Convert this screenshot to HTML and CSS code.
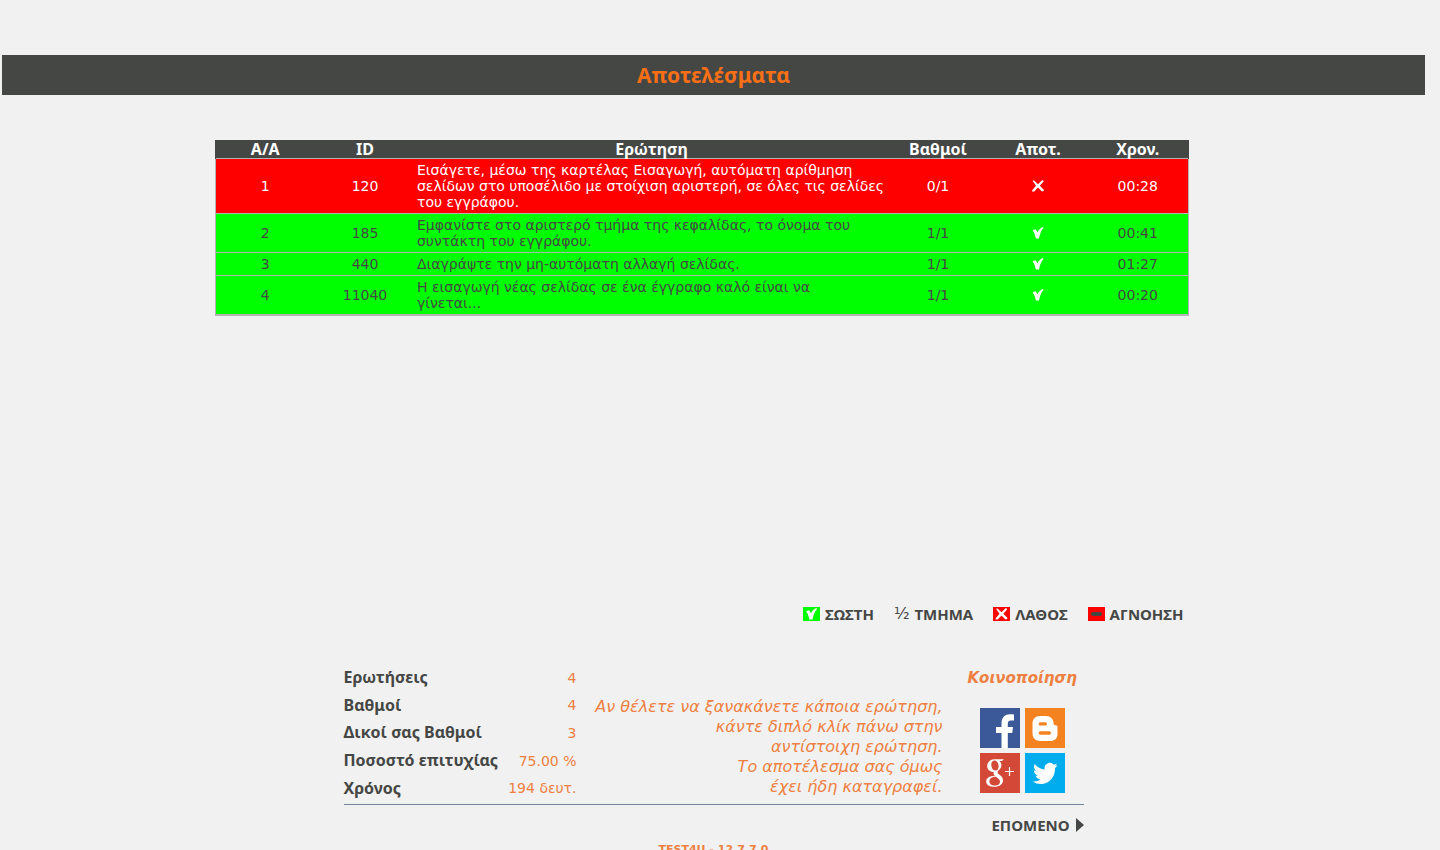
FILE: index.html
```html
<!DOCTYPE html>
<html lang="el">
<head>
<meta charset="utf-8">
<title>Αποτελέσματα</title>
<link rel="stylesheet" href="styles.css">
</head>
<body>
<svg class="symbols" aria-hidden="true">
  <symbol id="check" viewBox="0 0 12 12"><path d="M0.600 3.200 3.800 2.300 5.400 5.200 C6.800 2.600 8.500 0.800 11 0 L11.500 1 C9.200 3.600 7.900 7 7 11.600 L3.900 11.600 C3.200 8.400 2.200 5.400 0.600 3.200Z" fill="#fff"/></symbol>
  <symbol id="cross" viewBox="0 0 14 12"><path d="M1.500 0.800 3 0.400 7 4.200 11 0.200 12.400 0.400 12.600 1.600 8.800 5.800 13 10 12.600 11 11 11.400 7 7.600 3.200 11.600 1 11.400 1.200 10.200 5 5.800Z" fill="#fff"/></symbol>
</svg>
<header class="banner"><h1>Αποτελέσματα</h1></header>
<main>
  <section class="results">
    <table class="grid">
      <colgroup><col class="c-num"><col class="c-num"><col><col class="c-num"><col class="c-num"><col class="c-num"></colgroup>
      <thead>
        <tr><th>A/A</th><th>ID</th><th>Ερώτηση</th><th>Βαθμοί</th><th>Αποτ.</th><th>Χρον.</th></tr>
      </thead>
      <tbody>
        <tr class="wrong"><td>1</td><td>120</td><td class="question">Εισάγετε, μέσω της καρτέλας Εισαγωγή, αυτόματη αρίθμηση<br>σελίδων στο υποσέλιδο με στοίχιση αριστερή, σε όλες τις σελίδες<br>του εγγράφου.</td><td>0/1</td><td><svg class="mark" role="img" aria-label="Λάθος"><use href="#cross"/></svg></td><td>00:28</td></tr>
        <tr><td>2</td><td>185</td><td class="question">Εμφανίστε στο αριστερό τμήμα της κεφαλίδας, το όνομα του<br>συντάκτη του εγγράφου.</td><td>1/1</td><td><svg class="mark" role="img" aria-label="Σωστή"><use href="#check"/></svg></td><td>00:41</td></tr>
        <tr><td>3</td><td>440</td><td class="question">Διαγράψτε την μη-αυτόματη αλλαγή σελίδας.</td><td>1/1</td><td><svg class="mark" role="img" aria-label="Σωστή"><use href="#check"/></svg></td><td>01:27</td></tr>
        <tr><td>4</td><td>11040</td><td class="question">Η εισαγωγή νέας σελίδας σε ένα έγγραφο καλό είναι να<br>γίνεται...</td><td>1/1</td><td><svg class="mark" role="img" aria-label="Σωστή"><use href="#check"/></svg></td><td>00:20</td></tr>
      </tbody>
    </table>
  </section>
  <ul class="legend">
    <li><svg viewBox="0 0 17 14"><path d="M0 0h17v14H0z" fill="#0f0"/><use href="#check" x="2" y="1" width="13" height="12"/></svg>ΣΩΣΤΗ</li>
    <li><span class="half">½</span>ΤΜΗΜΑ</li>
    <li><svg viewBox="0 0 17 14"><path d="M0 0h17v14H0z" fill="#f00"/><use href="#cross" x="1" y="1" width="15" height="12"/></svg>ΛΑΘΟΣ</li>
    <li><svg viewBox="0 0 17 14"><path d="M0 0h17v14H0z" fill="#f00"/><rect x="3" y="5" width="11" height="4" rx="2" fill="#454745"/></svg>ΑΓΝΟΗΣΗ</li>
  </ul>
  <section class="summary">
    <table class="stats">
      <tr><th scope="row">Ερωτήσεις</th><td>4</td></tr>
      <tr><th scope="row">Βαθμοί</th><td>4</td></tr>
      <tr><th scope="row">Δικοί σας Βαθμοί</th><td>3</td></tr>
      <tr><th scope="row">Ποσοστό επιτυχίας</th><td>75.00 %</td></tr>
      <tr><th scope="row">Χρόνος</th><td>194 δευτ.</td></tr>
    </table>
    <p class="hint">Αν θέλετε να ξανακάνετε κάποια ερώτηση,<br>κάντε διπλό κλίκ πάνω στην<br>αντίστοιχη ερώτηση.<br>Το αποτέλεσμα σας όμως<br>έχει ήδη καταγραφεί.</p>
    <div class="share">
      <h2>Κοινοποίηση</h2>
      <nav class="social">
        <a href="#" aria-label="Facebook"><svg viewBox="0 0 40 40"><path d="M0 0h40v40H0z" fill="#3b5998"/><path d="M21.500 40V25H16v-6h5.500v-3.500C21.500 9.500 25 6.300 30 6.300c1.800 0 3 .1 4 .2v6h-3c-2.600 0-3.200 1.300-3.200 3.300V19H33l-.8 6h-4.400v15Z" fill="#fff"/></svg></a>
        <a href="#" aria-label="Blogger"><svg viewBox="0 0 40 40"><path d="M0 0h40v40H0z" fill="#f58220"/><path fill-rule="evenodd" d="M15 8h6c4.500 0 7.500 3 7.500 7 0 1.600.8 2.200 2 2.200 1.300 0 2 .8 2 2V26c0 4.500-3 7-7.500 7H15c-4.500 0-7.500-3-7.500-7.500v-10C7.500 11 10.500 8 15 8Zm.3 6.200a1.700 1.700 0 0 0 0 3.400h5a1.700 1.700 0 0 0 0-3.400Zm0 9.100a1.700 1.700 0 0 0 0 3.400h9a1.700 1.700 0 0 0 0-3.400Z" fill="#fff"/></svg></a>
        <a href="#" aria-label="Google+"><svg viewBox="0 0 40 40"><path d="M0 0h40v40H0z" fill="#d34836"/><path d="M24 6.200h-9c-5 0-7.800 3-7.800 6.700 0 3.500 2.700 6 6.600 6-.5 1.700-.1 2.700 1 3.900-5.200.1-8.600 2.200-8.600 5.700 0 3.400 3.400 5.300 8 5.300 5.400 0 8.800-2.800 8.800-6.300 0-2.600-1.300-4.100-3.200-5.500-1.600-1.200-2.200-1.800-2.200-2.800s.6-1.600 1.600-2.500c1.500-1.200 2.200-2.600 2.200-4.500 0-1.800-.8-3.200-1.900-4.200h2.500Zm-9.300 1.200c2.200 0 3.900 2.800 3.900 6 0 2.500-1.300 4-3.300 4-2.400 0-4-3-4-6 0-2.400 1.300-4 3.400-4Zm1 16.300c3 2 4.300 3.100 4.300 5.100 0 2.200-1.700 3.700-4.800 3.700-3.500 0-5.800-1.700-5.800-4.100 0-2.900 2.500-4.700 6.300-4.700Z" fill="#fff" fill-rule="evenodd"/><path d="M29.500 14v9M25 18.500h9" stroke="#fff" stroke-width="1.200"/></svg></a>
        <a href="#" aria-label="Twitter"><svg viewBox="0 0 40 40"><path d="M0 0h40v40H0z" fill="#00aced"/><path d="M32.600 12.300c-.9.400-1.800.7-2.700.8 1-.6 1.700-1.500 2-2.600-1 .6-2 1-3.100 1.200a5.200 5.200 0 0 0-9 4.800c-4-.2-7.600-2.300-10-5.500-1.500 2.700-.7 5.400 1.500 7-.9 0-1.700-.3-2.400-.7 0 2.700 1.600 4.600 4 5.300-.7.200-1.400.2-2.200.1.700 2 2.500 3.400 4.800 3.500A10.300 10.300 0 0 1 7.700 28.400 15 15 0 0 0 15.700 31C25 31 30.300 23 30 15.100c1-.7 1.900-1.700 2.600-2.800Z" fill="#fff"/></svg></a>
      </nav>
    </div>
  </section>
  <div class="actions"><button type="button" class="next">ΕΠΟΜΕΝΟ<svg viewBox="0 0 8 14"><path d="M0 0 8 7 0 14Z" fill="#454745"/></svg></button></div>
</main>
<footer>TEST4U - 12.7.7.0</footer>
</body>
</html>
```
FILE: styles.css
```css
* { box-sizing: border-box; }
body {
  margin: 0;
  padding: 55px 15px 0 2px;
  background: #f1f1f1;
  color: #454745;
  font: 14px/16px "DejaVu Sans", sans-serif;
}
.symbols { display: none; }
h1, th, .legend, .next { font-family: "Noto Sans", sans-serif; font-weight: bold; }
.banner { background: #454745; }
h1 {
  margin: 0;
  color: #f96f15;
  font-size: 21px;
  line-height: 40px;
  text-align: center;
}
main { max-width: 1000px; margin: 45px auto 0; }
.results { min-height: 464px; padding: 0 25px 0 1px; }
.grid {
  width: 100%;
  table-layout: fixed;
  border-collapse: collapse;
  border: 1px solid #b4b4b4;
  border-top: 0;
  border-bottom-width: 2px;
}
.c-num { width: 100px; }
.grid th {
  padding: 0;
  background: #454745;
  color: #fff;
  font-size: 16px;
  line-height: 18px;
}
.grid th:first-child { border-left: 1px solid #454745; }
.grid th:last-child { border-right: 1px solid #454745; }
.grid td {
  height: 22px;
  padding: 3px 2px;
  background: #0f0;
  border-top: 1px solid #b4b4b4;
  text-align: center;
}
.grid .question { text-align: left; white-space: nowrap; }
.grid .wrong td { background: #f00; color: #fff; }
.mark { display: block; width: 14px; height: 12px; margin: 0 auto; }
.legend {
  display: flex;
  justify-content: flex-end;
  gap: 20px;
  margin: 0;
  padding: 0 30px 0 0;
  list-style: none;
  font-size: 15px;
  line-height: 20px;
}
.legend li { display: flex; align-items: center; gap: 5px; }
.legend svg { width: 17px; height: 14px; }
.half { font: 16px/16px "DejaVu Sans", sans-serif; }
.summary {
  display: flex;
  align-items: flex-start;
  max-width: 740px;
  margin: 40px auto 0;
  padding-bottom: 0;
  border-bottom: 1px solid #75869a;
}
.stats { width: 233px; height: 138px; border-collapse: collapse; }
.stats th { padding: 0; font-size: 16px; line-height: 27px; text-align: left; white-space: nowrap; }
.stats td { padding: 0; color: #ee8041; text-align: right; white-space: nowrap; }
.hint {
  flex: 1;
  margin: 33px 0 0;
  color: #ee8041;
  font-size: 16px;
  font-style: italic;
  line-height: 20px;
  text-align: right;
  white-space: nowrap;
}
.share { width: 141px; padding: 0 0 11px 25px; }
h2 { margin: 0; color: #ee8041; font-size: 15px; font-style: italic; line-height: 28px; }
.social { display: grid; grid-template-columns: 40px 40px; gap: 5px; padding: 16px 0 0 12px; }
.social svg { display: block; width: 40px; height: 40px; }
.actions { display: flex; justify-content: flex-end; max-width: 740px; margin: 10px auto 0; }
.next {
  display: flex;
  align-items: center;
  gap: 6px;
  padding: 0;
  border: 0;
  background: none;
  color: inherit;
  font-size: 15px;
  line-height: 20px;
}
.next svg { width: 8px; height: 14px; }
footer { margin-top: 7px; color: #ee8041; font-size: 11px; font-weight: bold; line-height: 16px; text-align: center; }
```
